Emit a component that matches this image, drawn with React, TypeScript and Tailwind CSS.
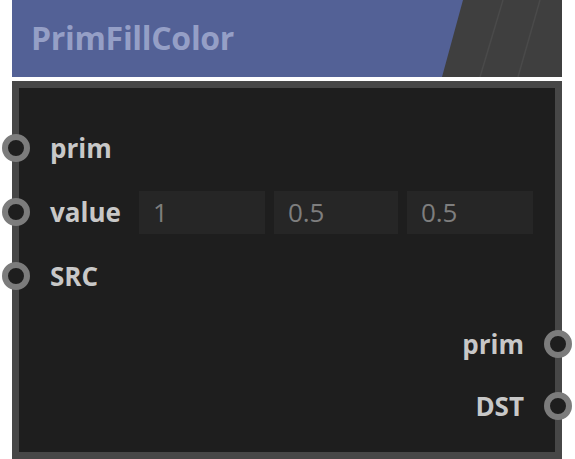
import React from "react";

function Socket({ side }: { side: "left" | "right" }) {
  return (
    <div
      className={
        "absolute top-1/2 -translate-y-1/2 w-[28px] h-[28px] rounded-full border-[6px] border-[#7c7c7c] bg-[#1e1e1e] " +
        (side === "left" ? "-left-[17px]" : "-right-[17px]")
      }
    />
  );
}

function InputRow({ label, children }: { label: string; children?: React.ReactNode }) {
  return (
    <div className="relative h-[64px] flex items-center pl-[31px]">
      <Socket side="left" />
      <span className="text-[26px] font-bold text-[#c8c8c8] leading-none">{label}</span>
      {children}
    </div>
  );
}

function OutputRow({ label }: { label: string }) {
  return (
    <div className="relative h-[62px] flex items-center justify-end pr-[31px]">
      <Socket side="right" />
      <span className="text-[26px] font-bold text-[#c8c8c8] leading-none">{label}</span>
    </div>
  );
}

function NumBox({ value, w }: { value: string; w: string }) {
  return (
    <div className={"h-[43px] bg-[#262626] flex items-center pl-[14px] text-[26px] text-[#7e7e7e] leading-none " + w}>
      {value}
    </div>
  );
}

export default function App() {
  return (
    <div className="w-[575px] h-[459px] bg-white overflow-hidden font-['Open_Sans',sans-serif]">
      <div className="ml-[12px] w-[550px] h-[77px] relative bg-[#3f3f3f] flex items-center pl-[19px]">
        <svg className="absolute inset-0" width="550" height="77" viewBox="0 0 550 77">
          <polygon points="0,0 451,0 430,77 0,77" fill="#536196" />
          <line x1="491" y1="0" x2="468" y2="77" stroke="#4a4a4a" strokeWidth="1.5" />
          <line x1="528" y1="0" x2="506" y2="77" stroke="#4a4a4a" strokeWidth="1.5" />
        </svg>
        <span className="relative text-[32px] font-bold text-[#959fc6] leading-none -mt-[2px] tracking-[-0.3px]">PrimFillColor</span>
      </div>
      <div className="mt-[4px] ml-[12px] w-[550px] h-[378px] border-[7px] border-[#474747] bg-[#1e1e1e] pt-[28px]">
        <InputRow label="prim" />
        <InputRow label="value">
          <div className="ml-[18px] flex gap-[9px]">
            <NumBox value="1" w="w-[126px]" />
            <NumBox value="0.5" w="w-[124px]" />
            <NumBox value="0.5" w="w-[126px]" />
          </div>
        </InputRow>
        <InputRow label="SRC" />
        <div className="mt-[5px]">
          <OutputRow label="prim" />
          <OutputRow label="DST" />
        </div>
      </div>
    </div>
  );
}
